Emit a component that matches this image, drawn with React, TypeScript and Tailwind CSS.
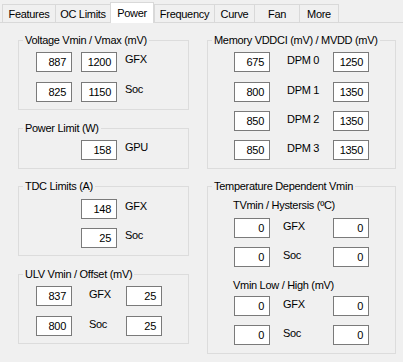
import React from "react";

const font = { fontFamily: '"Liberation Sans", Arial, sans-serif' };

function Box({ v }: { v: string }) {
  return (
    <div className="w-[36px] h-[20px] shrink-0 border border-[#7a7a7a] bg-white flex items-center justify-end pr-[5px] leading-[14px]">
      {v}
    </div>
  );
}

function Label({ t, className = "" }: { t: string; className?: string }) {
  return <span className={`leading-[14px] whitespace-nowrap ${className}`}>{t}</span>;
}

function Group({
  title,
  className = "",
  children,
}: {
  title: string;
  className?: string;
  children: React.ReactNode;
}) {
  return (
    <div className={`relative border border-[#dcdcdc] ${className}`}>
      <span className="absolute left-[4px] top-[-8px] px-[2px] bg-[#f0f0f0] leading-[14px] whitespace-nowrap">
        {title}
      </span>
      {children}
    </div>
  );
}

const tabs = [
  { t: "Features", w: "w-[53px]" },
  { t: "OC Limits", w: "w-[55px]" },
  { t: "Power", w: "w-[44px]", sel: true },
  { t: "Frequency", w: "w-[60px]" },
  { t: "Curve", w: "w-[40px]" },
  { t: "Fan", w: "w-[45px]" },
  { t: "More", w: "w-[40px]" },
];

export default function App() {
  return (
    <div
      className="w-[403px] h-[362px] bg-[#f0f0f0] text-[11px] tracking-[-0.3px] text-black overflow-hidden"
      style={font}
    >
      {/* Tab strip */}
      <div className="flex items-end h-[23px] pl-[2px] border-b border-[#d9d9d9]">
        {tabs.map((tb, i) =>
          tb.sel ? (
            <div
              key={tb.t}
              className={`${tb.w} h-[21px] -mb-px relative z-10 bg-white border-l border-t border-r border-[#d9d9d9] flex justify-center pt-[3px] leading-[14px]`}
            >
              {tb.t}
            </div>
          ) : (
            <div
              key={tb.t}
              className={`${tb.w} h-[18px] border-t border-l border-[#d9d9d9] ${
                i === tabs.length - 1 ? "border-r" : ""
              } flex justify-center pt-[2px] leading-[14px]`}
            >
              {tb.t}
            </div>
          )
        )}
      </div>

      {/* Page */}
      <div className="flex pt-[17px] pl-[18px]">
        {/* Left column */}
        <div className="w-[171px] flex flex-col">
          <Group title="Voltage Vmin / Vmax (mV)" className="pt-[11px] pb-[7px] pl-[17px]">
            <div className="flex flex-col gap-[10px]">
              {[
                ["887", "1200", "GFX"],
                ["825", "1150", "Soc"],
              ].map(([a, b, l]) => (
                <div key={l} className="flex items-start">
                  <Box v={a} />
                  <div className="ml-[9px]">
                    <Box v={b} />
                  </div>
                  <Label t={l} className="ml-[8px]" />
                </div>
              ))}
            </div>
          </Group>

          <Group title="Power Limit (W)" className="mt-[18px] pt-[11px] pb-[8px] pl-[62px]">
            <div className="flex items-start">
              <Box v="158" />
              <Label t="GPU" className="ml-[8px]" />
            </div>
          </Group>

          <Group title="TDC Limits (A)" className="mt-[17px] pt-[12px] pb-[7px] pl-[62px]">
            <div className="flex flex-col gap-[9px]">
              {[
                ["148", "GFX"],
                ["25", "Soc"],
              ].map(([a, l]) => (
                <div key={l} className="flex items-start">
                  <Box v={a} />
                  <Label t={l} className="ml-[8px]" />
                </div>
              ))}
            </div>
          </Group>

          <Group title="ULV Vmin / Offset (mV)" className="mt-[18px] pt-[11px] pb-[7px] pl-[17px]">
            <div className="flex flex-col gap-[10px]">
              {[
                ["837", "GFX", "25"],
                ["800", "Soc", "25"],
              ].map(([a, l, b]) => (
                <div key={l} className="flex items-start">
                  <Box v={a} />
                  <div className="w-[54px] pl-[17px]">
                    <Label t={l} />
                  </div>
                  <Box v={b} />
                </div>
              ))}
            </div>
          </Group>
        </div>

        {/* Right column */}
        <div className="w-[189px] ml-[18px] flex flex-col">
          <Group title="Memory VDDCI (mV) / MVDD (mV)" className="pt-[11px] pb-[8px] pl-[26px]">
            <div className="flex flex-col">
              {[
                ["675", "DPM 0", "1250", ""],
                ["800", "DPM 1", "1350", "mt-[10px]"],
                ["850", "DPM 2", "1350", "mt-[9px]"],
                ["850", "DPM 3", "1350", "mt-[9px]"],
              ].map(([a, l, b, m]) => (
                <div key={l} className={`flex items-start ${m}`}>
                  <Box v={a} />
                  <div className="w-[63px] pl-[17px]">
                    <Label t={l} />
                  </div>
                  <Box v={b} />
                </div>
              ))}
            </div>
          </Group>

          <Group title="Temperature Dependent Vmin" className="mt-[17px] pt-[11px] pb-[8px] pl-[26px]">
            <div className="flex flex-col">
              <Label t="TVmin / Hystersis (ºC)" className="-ml-[1px]" />
              {[
                ["0", "GFX", "0", "mt-[6px]"],
                ["0", "Soc", "0", "mt-[9px]"],
              ].map(([a, l, b, m]) => (
                <div key={l} className={`flex items-start ${m}`}>
                  <Box v={a} />
                  <div className="w-[63px] pl-[13px]">
                    <Label t={l} />
                  </div>
                  <Box v={b} />
                </div>
              ))}
              <Label t="Vmin Low / High (mV)" className="-ml-[1px] mt-[11px]" />
              {[
                ["0", "GFX", "0", "mt-[4px]"],
                ["0", "Soc", "0", "mt-[9px]"],
              ].map(([a, l, b, m]) => (
                <div key={l + "2"} className={`flex items-start ${m}`}>
                  <Box v={a} />
                  <div className="w-[63px] pl-[13px]">
                    <Label t={l} />
                  </div>
                  <Box v={b} />
                </div>
              ))}
            </div>
          </Group>
        </div>
      </div>
    </div>
  );
}
